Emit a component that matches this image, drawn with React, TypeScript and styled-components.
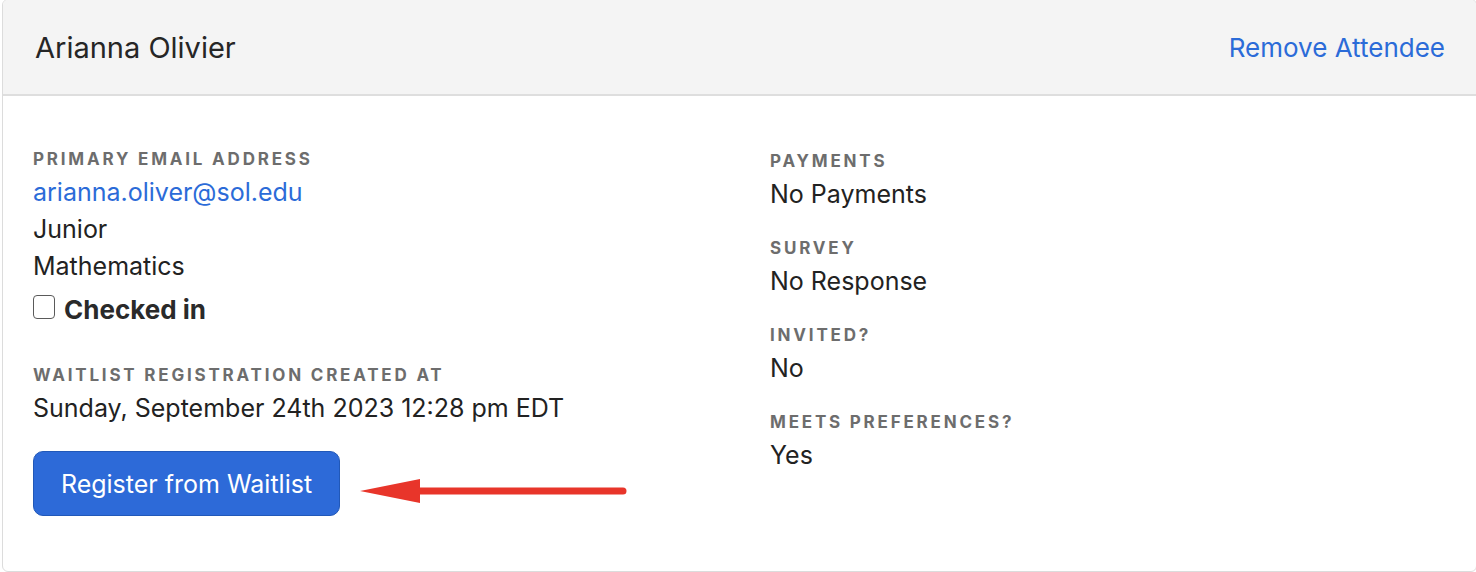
import React from 'react';
import styled, { createGlobalStyle } from 'styled-components';

const GlobalStyle = createGlobalStyle`
  html, body {
    margin: 0;
    padding: 0;
    background: #ffffff;
    font-family: Inter, "Noto Sans", sans-serif;
    color: #222222;
    overflow: hidden;
  }
`;

const Card = styled.div`
  margin: -1px 0 0 2px;
  width: 1473px;
  border: 1px solid #dcdcdc;
  border-radius: 6px;
  overflow: hidden;
  background: #ffffff;
`;

const Header = styled.div`
  display: flex;
  align-items: center;
  justify-content: space-between;
  height: 96px;
  padding: 0 31px 0 32px;
  background: #f4f4f4;
  border-bottom: 2px solid #dedede;
  box-sizing: border-box;
`;

const Name = styled.h2`
  margin: 0;
  font-size: 29px;
  font-weight: 400;
  color: #262626;
`;

const Link = styled.a`
  color: #2b6bd8;
  text-decoration: none;
  font-size: 26px;
  cursor: pointer;
`;

const Body = styled.div`
  display: grid;
  grid-template-columns: 737px 1fr;
  padding: 50px 30px 55px 30px;
`;

const Column = styled.div<{ $offset?: number }>`
  display: flex;
  flex-direction: column;
  padding-top: ${(p) => p.$offset ?? 0}px;
`;

const Group = styled.div<{ $gap?: number }>`
  display: flex;
  flex-direction: column;
  margin-bottom: ${(p) => p.$gap ?? 25}px;
`;

const Label = styled.div`
  font-size: 17px;
  line-height: 20px;
  font-weight: 700;
  letter-spacing: 2.8px;
  text-transform: uppercase;
  color: #6d6d6d;
  margin-bottom: 5px;
`;

const Value = styled.div`
  font-size: 25px;
  line-height: 37px;
`;

const Email = styled(Link)`
  font-size: 25px;
  line-height: 37px;
`;

const CheckRow = styled.label`
  display: flex;
  align-items: center;
  gap: 9px;
  margin-top: 6px;
  font-size: 26px;
  line-height: 37px;
  font-weight: 700;
  color: #2a2a2a;
`;

const Box = styled.span`
  display: inline-block;
  width: 20px;
  height: 22px;
  border: 1.5px solid #5a5a5a;
  border-radius: 4px;
  margin-top: -6px;
`;

const ActionRow = styled.div`
  display: flex;
  align-items: center;
`;

const Button = styled.button`
  height: 65px;
  width: 307px;
  border: 1px solid #2158b8;
  border-radius: 10px;
  background: #2d6ad8;
  color: #ffffff;
  font-family: inherit;
  font-size: 25px;
  cursor: pointer;
`;

const Arrow = styled.svg`
  margin-left: 19px;
  margin-top: 15px;
`;

const App = () => (
  <>
    <GlobalStyle />
    <Card>
      <Header>
        <Name>Arianna Olivier</Name>
        <Link>Remove Attendee</Link>
      </Header>
      <Body>
        <Column $offset={3}>
          <Group $gap={37}>
            <Label>Primary Email Address</Label>
            <Email>arianna.oliver@sol.edu</Email>
            <Value>Junior</Value>
            <Value>Mathematics</Value>
            <CheckRow>
              <Box />
              Checked in
            </CheckRow>
          </Group>
          <Group $gap={24}>
            <Label>Waitlist Registration Created At</Label>
            <Value>Sunday, September 24th 2023 12:28 pm EDT</Value>
          </Group>
          <ActionRow>
            <Button>Register from Waitlist</Button>
            <Arrow width="270" height="30" viewBox="0 0 270 30">
              <path d="M60 11.5 L264 11.5 a3.5 3.5 0 0 1 0 7 L60 18.5 Z" fill="#e8352a" />
              <path d="M1 15 L61 3 L61 27 Z" fill="#e8352a" />
            </Arrow>
          </ActionRow>
        </Column>
        <Column $offset={5}>
          <Group>
            <Label>Payments</Label>
            <Value>No Payments</Value>
          </Group>
          <Group>
            <Label>Survey</Label>
            <Value>No Response</Value>
          </Group>
          <Group>
            <Label>Invited?</Label>
            <Value>No</Value>
          </Group>
          <Group>
            <Label>Meets Preferences?</Label>
            <Value>Yes</Value>
          </Group>
        </Column>
      </Body>
    </Card>
  </>
);

export default App;
